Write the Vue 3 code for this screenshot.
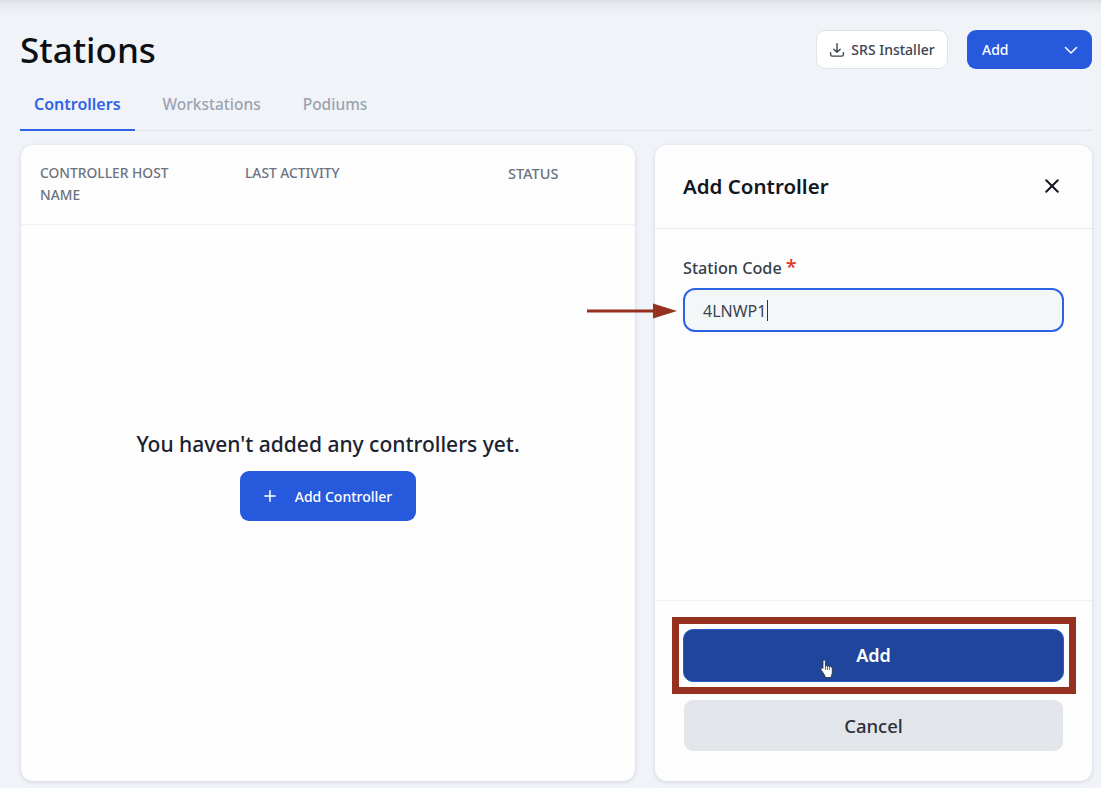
<script setup>
const columns = [
  { label: 'CONTROLLER HOST NAME', cls: 'col-host' },
  { label: 'LAST ACTIVITY', cls: 'col-activity' },
  { label: 'STATUS', cls: 'col-status' },
]
const tabs = ['Controllers', 'Workstations', 'Podiums']
</script>

<template>
  <div class="page">
    <div class="topshade"></div>
    <header class="header">
      <h1 class="title">Stations</h1>
      <div class="actions">
        <button class="btn-outline">
          <svg width="16" height="16" viewBox="0 0 16 16" fill="none" stroke="#3b4350" stroke-width="1.4" stroke-linecap="round" stroke-linejoin="round">
            <path d="M8 1.8v8.4M4.8 7.2 8 10.3l3.2-3.1M1.600 10.600v1.800c0 1 .7 1.700 1.700 1.700h9.400c1 0 1.700-.7 1.700-1.700v-1.800" />
          </svg>
          SRS Installer
        </button>
        <button class="btn-add">
          <span>Add</span>
          <svg width="14" height="14" viewBox="0 0 14 14" fill="none" stroke="#fff" stroke-width="1.5" stroke-linecap="round" stroke-linejoin="round">
            <path d="M1.500 4.500 7 10l5.500-5.500" />
          </svg>
        </button>
      </div>
    </header>

    <nav class="tabs">
      <a v-for="(t, i) in tabs" :key="t" class="tab" :class="{ active: i === 0 }">{{ t }}</a>
    </nav>

    <main class="content">
      <section class="card list">
        <div class="thead">
          <div v-for="c in columns" :key="c.label" class="th" :class="c.cls">{{ c.label }}</div>
        </div>
        <div class="empty">
          <p class="empty-text">You haven't added any controllers yet.</p>
          <button class="btn-primary">
            <svg width="12" height="12" viewBox="0 0 12 12" fill="none" stroke="#fff" stroke-width="1.5" stroke-linecap="round">
              <path d="M6 .8v10.400M.8 6h10.400" />
            </svg>
            Add Controller
          </button>
        </div>
      </section>

      <aside class="card panel">
        <div class="panel-head">
          <h2 class="panel-title">Add Controller</h2>
          <svg width="14" height="14" viewBox="0 0 14 14" fill="none" stroke="#14181f" stroke-width="2" stroke-linecap="round">
            <path d="M1.200 1.200l11.600 11.600M12.800 1.200 1.200 12.800" />
          </svg>
        </div>
        <div class="panel-body">
          <label class="field-label">Station Code<span class="req">*</span></label>
          <div class="input"><span>4LNWP1</span><i class="caret"></i></div>
        </div>
        <div class="panel-foot">
          <button class="btn-submit">Add</button>
          <button class="btn-cancel">Cancel</button>
        </div>
      </aside>
    </main>

    <!-- annotations laid over the screenshot -->
    <svg class="arrow" width="92" height="20" viewBox="0 0 92 20">
      <path d="M0 8.500h68v3H0z" fill="#96301f" />
      <path d="M66 2.500 90 10 66 17.500z" fill="#96301f" />
    </svg>
    <div class="redbox"></div>
    <svg class="cursor" width="14" height="18" viewBox="0 0 14 18">
      <path d="M3 1.400C3 .5 3.500 0 4.200 0s1.200.5 1.200 1.400V6c.7-.3 1.500-.2 2 .2.7-.3 1.500-.2 2 .3.800-.3 1.700 0 2.200.6.500.6.700 1.300.700 2.400v3c0 1.200-.4 2.200-1 3v2H5v-1.700L1.500 10.500C.8 9.600.8 8.700 1.400 8.200c.6-.4 1.200-.2 1.600.2V1.400z" fill="#fff" stroke="#2b2b2b" stroke-width=".8" stroke-linejoin="round" />
      <path d="M5.400 6v4M7.400 6.200V10M9.400 6.500V10" stroke="#2b2b2b" stroke-width=".7" fill="none" />
    </svg>
  </div>
</template>

<style>
body {
  background: #f0f3f8;
}
</style>

<style scoped>
.page {
  position: relative;
  width: 1101px;
  height: 788px;
  box-sizing: border-box;
  padding: 30px 9px 7px 20px;
  background: #f0f3f8;
  font-family: "Noto Sans", "Open Sans", sans-serif;
  overflow: hidden;
  display: flex;
  flex-direction: column;
}
.topshade {
  position: absolute;
  left: 0;
  right: 0;
  top: 0;
  height: 16px;
  background: linear-gradient(#d9dce0 0, #e6e9ed 25%, #f0f3f8 100%);
}
.header {
  position: relative;
  display: flex;
  justify-content: space-between;
  align-items: center;
  height: 39px;
}
.title {
  margin: 0;
  font-size: 35px;
  line-height: 40px;
  font-weight: 500;
  color: #0c0f14;
}
.actions {
  display: flex;
  align-items: center;
  gap: 19px;
}
.btn-outline {
  display: flex;
  align-items: center;
  justify-content: center;
  gap: 6px;
  width: 132px;
  height: 39px;
  box-sizing: border-box;
  background: #fff;
  border: 1px solid #dfe2e7;
  border-radius: 9px;
  font: 500 14px "Noto Sans", sans-serif;
  color: #3b4350;
  padding: 0;
}
.btn-add {
  display: flex;
  align-items: center;
  justify-content: space-between;
  width: 125px;
  height: 39px;
  box-sizing: border-box;
  padding: 0 14px 0 15px;
  background: #2659dc;
  border: 0;
  border-radius: 9px;
  color: #fff;
  font: 500 14px "Noto Sans", sans-serif;
}
.tabs {
  display: flex;
  margin-top: 11px;
  border-bottom: 1px solid #e0e4ea;
  box-sizing: border-box;
  height: 51px;
}
.tab {
  display: flex;
  align-items: center;
  justify-content: center;
  height: 50px;
  box-sizing: border-box;
  padding: 0 14px 2px;
  margin-right: 14px;
  font-size: 15.500px;
  font-weight: 500;
  color: #9ca3af;
}
.tab.active {
  color: #2f63e6;
  font-weight: 600;
  font-size: 16px;
  border-bottom: 2px solid #2f63e6;
  height: 51px;
}
.content {
  display: flex;
  gap: 20px;
  flex: 1;
  margin-top: 14px;
  padding-left: 1px;
  min-height: 0;
}
.card {
  background: #fdfdfe;
  border-radius: 12px;
  box-shadow: 0 1px 4px rgba(30, 40, 60, 0.14);
  display: flex;
  flex-direction: column;
}
.list {
  width: 614px;
}
.thead {
  display: flex;
  height: 80px;
  box-sizing: border-box;
  padding: 17px 19px 0;
  border-bottom: 1px solid #eef0f3;
}
.th {
  font-size: 13.800px;
  line-height: 22px;
  font-weight: 500;
  color: #6b7280;
}
.col-host { width: 205px; padding-right: 50px; box-sizing: border-box; }
.col-activity { width: 263px; }
.col-status { font-size: 14.500px; }
.empty {
  flex: 1;
  display: flex;
  flex-direction: column;
  align-items: center;
  padding-top: 204px;
}
.empty-text {
  margin: 0;
  font-size: 21px;
  line-height: 30px;
  font-weight: 500;
  color: #1b2230;
}
.btn-primary {
  display: flex;
  align-items: center;
  justify-content: center;
  gap: 19px;
  margin-top: 12px;
  width: 176px;
  height: 50px;
  background: #2659dc;
  border: 0;
  border-radius: 9px;
  color: #fff;
  font: 500 14px "Noto Sans", sans-serif;
}
.panel {
  width: 437px;
}
.panel-head {
  display: flex;
  justify-content: space-between;
  align-items: center;
  height: 84px;
  box-sizing: border-box;
  padding: 0 33px 2px 28px;
  border-bottom: 1px solid #e8eaee;
}
.panel-title {
  margin: 0;
  font-size: 20.500px;
  font-weight: 600;
  color: #12161d;
}
.panel-body {
  flex: 1;
  padding: 27px 28px 0;
}
.field-label {
  display: block;
  font-size: 16.200px;
  line-height: 24px;
  font-weight: 500;
  color: #363d49;
}
.req {
  margin-left: 4px;
  color: #e5322d;
  font-size: 20px;
  line-height: 20px;
}
.input {
  display: flex;
  align-items: center;
  margin-top: 8px;
  width: 381px;
  height: 44px;
  box-sizing: border-box;
  padding: 1px 18px 0;
  background: #f4f7f7;
  border: 2px solid #2f63e6;
  border-radius: 12px;
  font-size: 16px;
  color: #3b4350;
}
.caret {
  display: block;
  width: 1px;
  height: 21px;
  margin-left: 1px;
  background: #333;
}
.panel-foot {
  display: flex;
  flex-direction: column;
  align-items: center;
  height: 181px;
  box-sizing: border-box;
  padding-top: 28px;
  border-top: 1px solid #eef0f3;
}
.btn-submit {
  width: 381px;
  height: 53px;
  padding: 0 0 2px;
  background: #20459c;
  border: 1px solid #2c5ccc;
  border-radius: 10px;
  color: #fff;
  font: 600 18px "Noto Sans", sans-serif;
}
.btn-cancel {
  margin-top: 18px;
  width: 379px;
  height: 51px;
  background: #e2e5e9;
  border: 0;
  border-radius: 9px;
  color: #2a303b;
  font: 500 18.500px "Noto Sans", sans-serif;
}
.arrow {
  position: absolute;
  left: 587px;
  top: 301px;
}
.redbox {
  position: absolute;
  left: 672px;
  top: 617px;
  width: 404px;
  height: 77px;
  box-sizing: border-box;
  border: 7px solid #96301f;
  background: transparent;
}
.cursor {
  position: absolute;
  left: 820px;
  top: 660px;
}
</style>
